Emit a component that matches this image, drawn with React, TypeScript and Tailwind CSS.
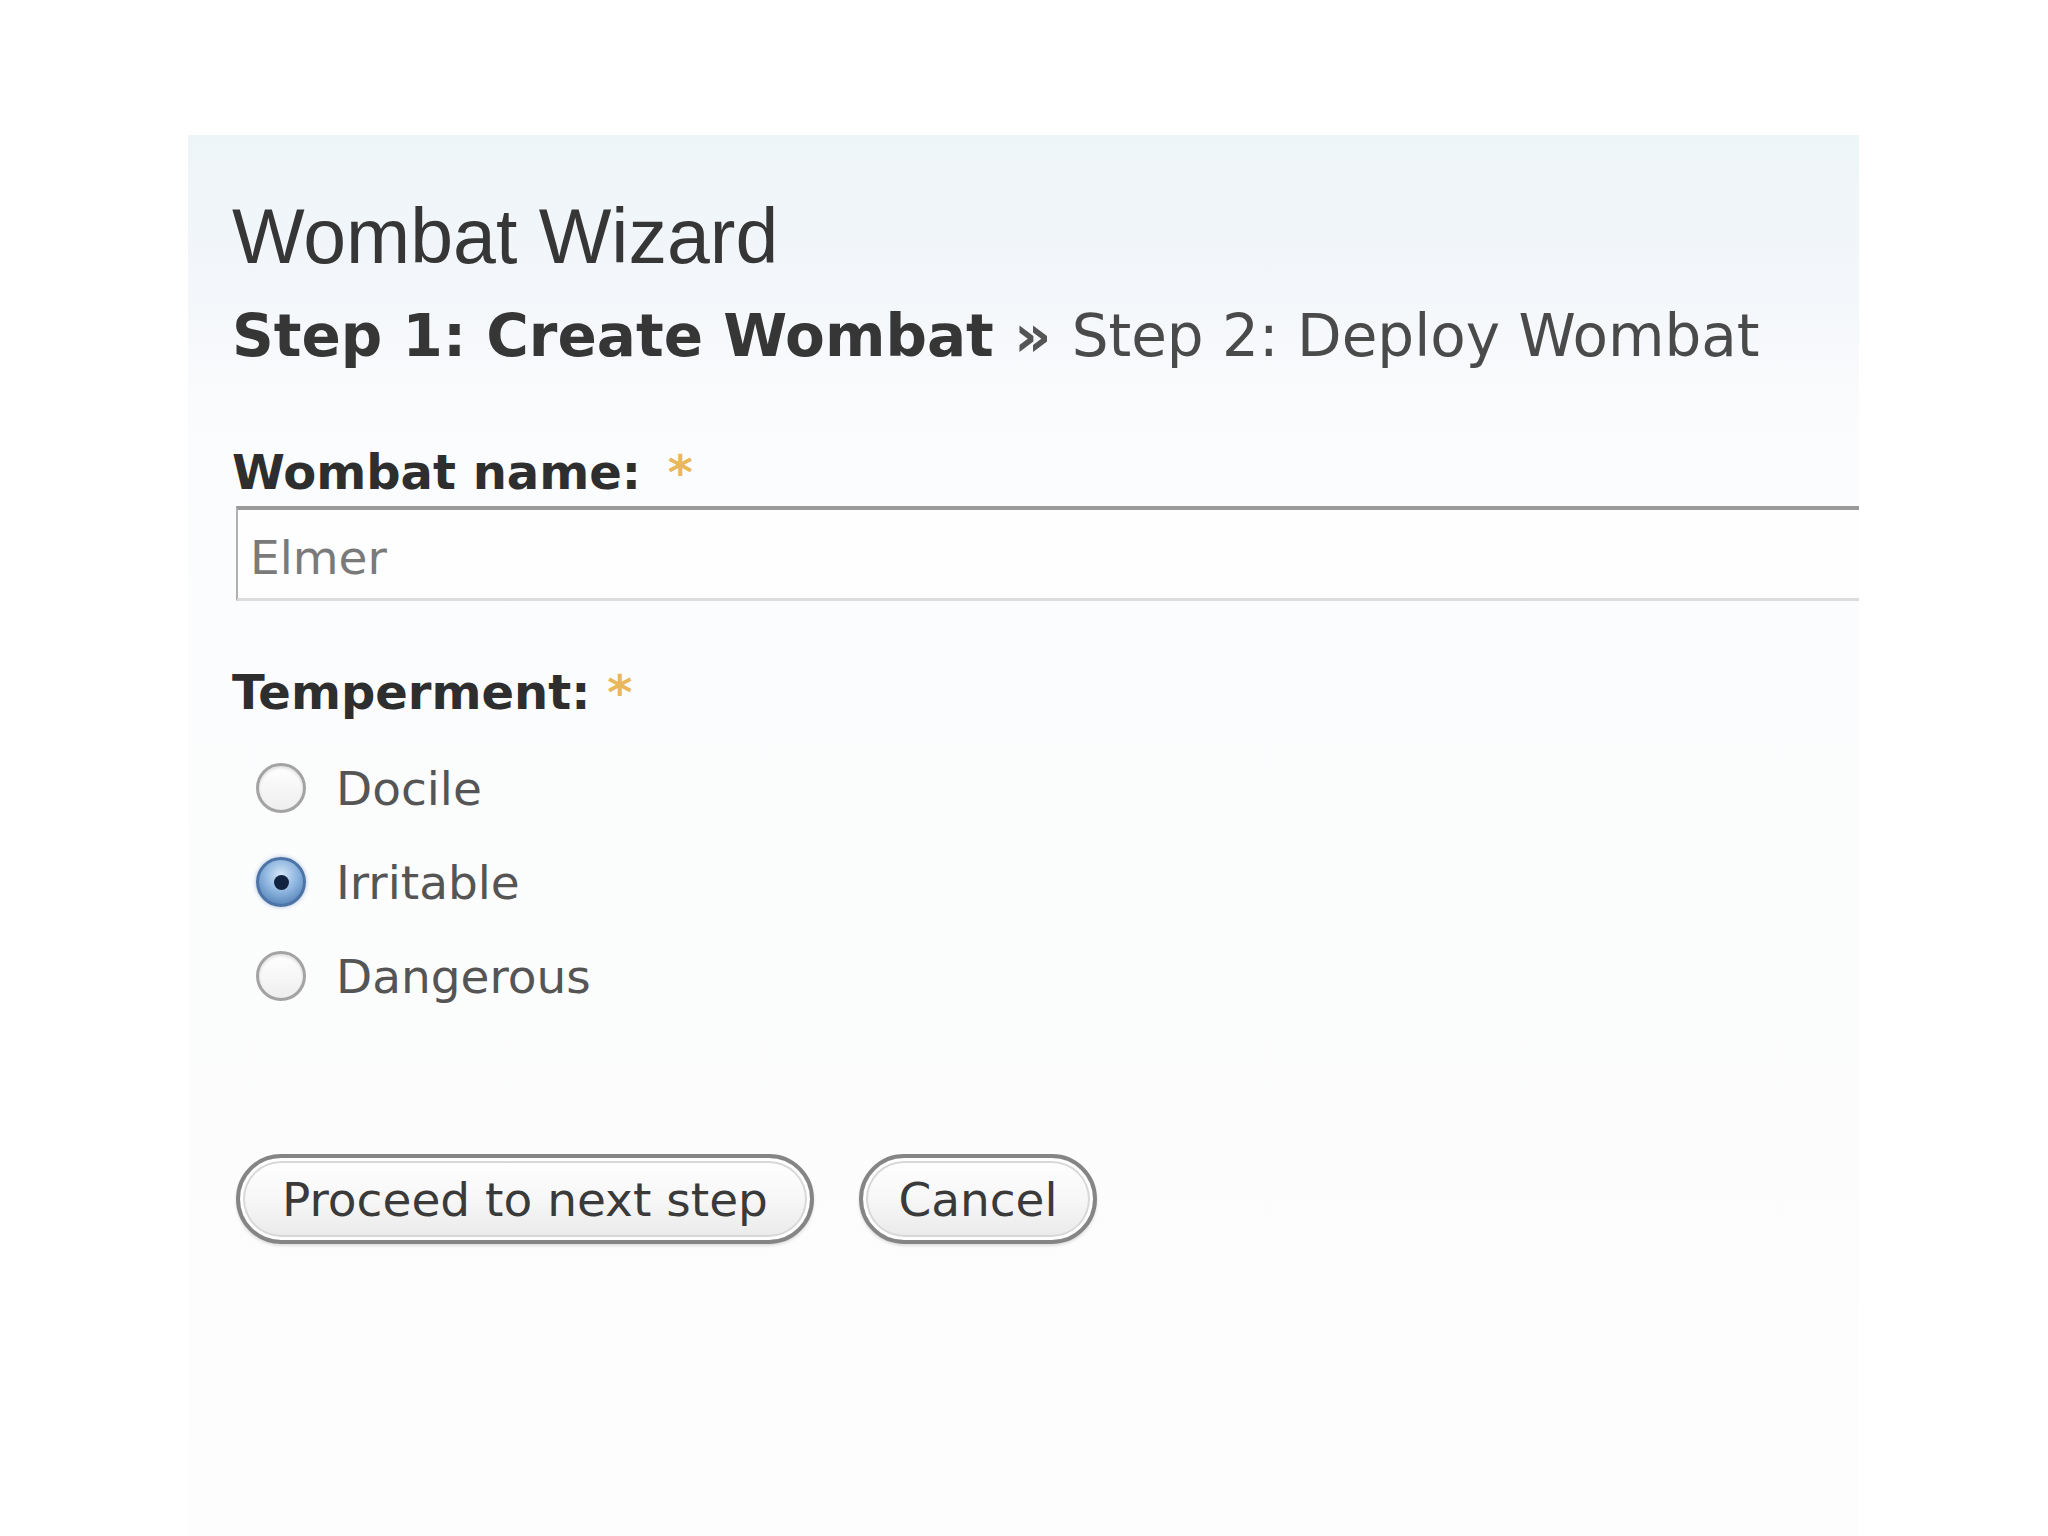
const sans = "font-['DejaVu_Sans',Verdana,sans-serif]";

function Radio({ label, checked }: { label: string; checked?: boolean }) {
  return (
    <div className="h-[94px] flex items-center ml-[24px]">
      {checked ? (
        <span className="w-[50px] h-[50px] rounded-full border-[3px] border-[#4d74a6] bg-[radial-gradient(circle_at_50%_35%,#d7e7f8_0%,#8fb6e0_45%,#3f6fa9_100%)] flex items-center justify-center shadow-[0_0_4px_rgba(60,110,170,0.45)]">
          <span className="w-[15px] h-[15px] rounded-full bg-[#12233f]" />
        </span>
      ) : (
        <span className="w-[50px] h-[50px] rounded-full border-[3px] border-[#a3a3a3] bg-[linear-gradient(to_bottom,#ffffff,#eeeeee)] shadow-[inset_0_2px_3px_rgba(0,0,0,0.12)]" />
      )}
      <span className={`${sans} ml-[30px] text-[47px] leading-none text-[#555555]`}>{label}</span>
    </div>
  );
}

function PillButton({ children, width }: { children: string; width: string }) {
  return (
    <button
      className={`${sans} ${width} h-[90px] rounded-full border-[4px] border-[#858585] bg-[linear-gradient(to_bottom,#ffffff_0%,#f7f7f7_50%,#e9e9e9_100%)] shadow-[inset_0_0_0_3px_#ffffff,inset_0_0_0_5px_#d8d8d8,0_2px_3px_rgba(0,0,0,0.12)] text-[47px] leading-none text-[#3a3a3a] flex items-center justify-center`}
    >
      {children}
    </button>
  );
}

export default function App() {
  return (
    <div className="w-full min-h-screen bg-white flex">
      <div className="ml-[188px] mt-[135px] w-[1671px] min-h-[1401px] overflow-hidden bg-[linear-gradient(to_bottom,#edf5f8_0px,#f3f6fa_140px,#fbfcfd_300px,#fdfdfd_100%)] pl-[44px] pt-[63px] flex flex-col">
        <h1 className="font-['Liberation_Sans',Arial,sans-serif] text-[77px] leading-none text-[#363636]">
          Wombat Wizard
        </h1>

        <div className={`${sans} mt-[32px] text-[58px] leading-none whitespace-nowrap`}>
          <span className="font-bold text-[#363636]">Step 1: Create Wombat</span>
          <span className="font-bold text-[#555555]"> » </span>
          <span className="text-[#4a4a4a]">Step 2: Deploy Wombat</span>
        </div>

        <label className={`${sans} mt-[83px] text-[48px] leading-none font-bold text-[#2e2e2e] whitespace-nowrap`}>
          Wombat name: <span className="text-[#e9b75c] ml-[10px]">*</span>
        </label>

        <div className="mt-[10px] ml-[4px] h-[95px] border-t-[4px] border-l-[2px] border-b-[3px] border-t-[#9a9a9a] border-l-[#b0b0b0] border-b-[#dcdcdc] bg-[#fefefe] pl-[12px] pt-[24px]">
          <span className={`${sans} text-[47px] leading-none text-[#7a7a7a]`}>Elmer</span>
        </div>

        <label className={`${sans} mt-[67px] text-[48px] leading-none font-bold text-[#2e2e2e] whitespace-nowrap`}>
          Temperment: <span className="text-[#e9b75c]">*</span>
        </label>

        <div className="mt-[25px] flex flex-col">
          <Radio label="Docile" />
          <Radio label="Irritable" checked />
          <Radio label="Dangerous" />
        </div>

        <div className="mt-[131px] ml-[4px] flex gap-[45px]">
          <PillButton width="w-[578px]">Proceed to next step</PillButton>
          <PillButton width="w-[238px]">Cancel</PillButton>
        </div>
      </div>
    </div>
  );
}
